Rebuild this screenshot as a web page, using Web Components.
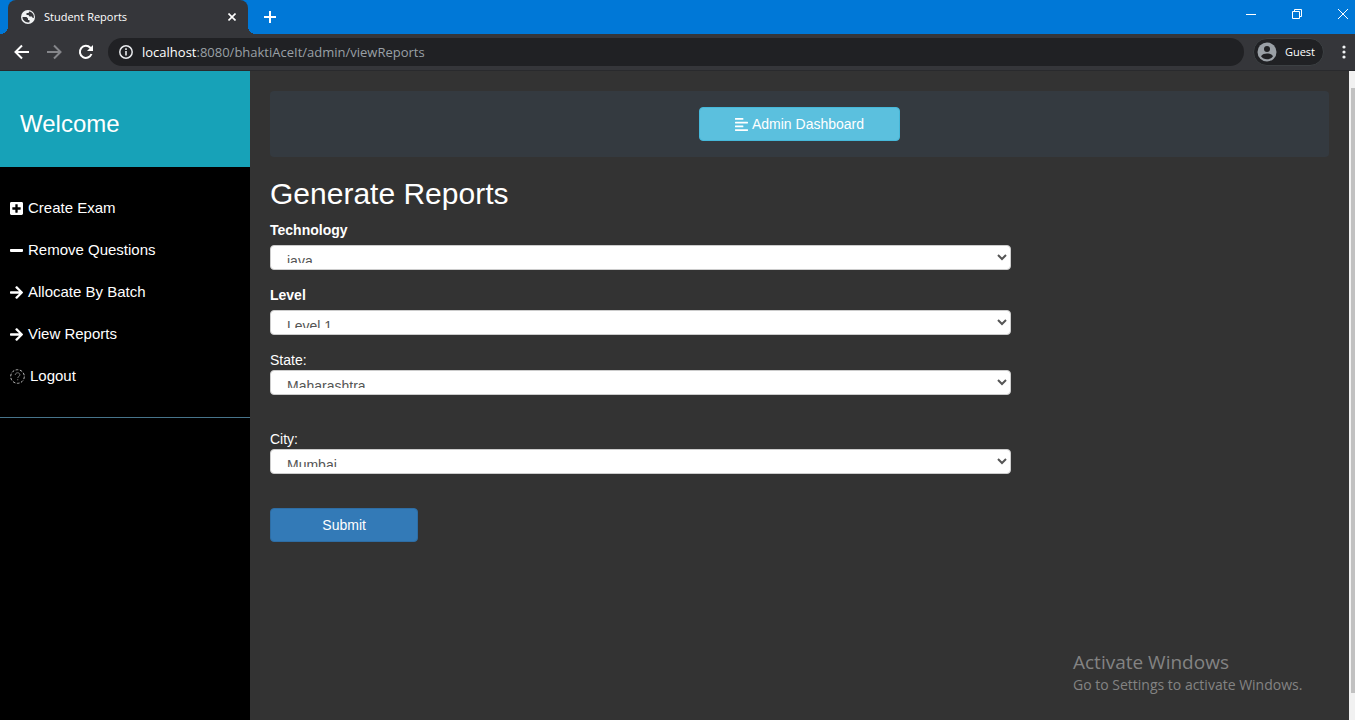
<!DOCTYPE html>
<html lang="en">
<head>
<meta charset="utf-8">
<title>Student Reports</title>
<style>
  html, body { height: 100%; }
  body { margin: 0; background: #333; font: 14px/20px "Liberation Sans", Arial, sans-serif; color: #fff; }
</style>
</head>
<body>
<browser-window>
  <tab-strip slot="chrome">Student Reports</tab-strip>
  <tool-bar slot="chrome" host="localhost" path=":8080/bhaktiAceIt/admin/viewReports" profile="Guest"></tool-bar>
  <side-bar heading="Welcome">
    <nav-item icon="plus">Create Exam</nav-item>
    <nav-item icon="minus">Remove Questions</nav-item>
    <nav-item icon="arrow">Allocate By Batch</nav-item>
    <nav-item icon="arrow">View Reports</nav-item>
    <nav-item icon="question">Logout</nav-item>
  </side-bar>
  <main-content>
    <dashboard-bar>Admin Dashboard</dashboard-bar>
    <report-form heading="Generate Reports"></report-form>
  </main-content>
  <scroll-track></scroll-track>
  <activation-note slot="overlay"></activation-note>
</browser-window>

<script>
const UI_FONT = '"Segoe UI", "Open Sans", "Noto Sans", sans-serif';

function define(name, render) {
  customElements.define(name, class extends HTMLElement {
    constructor() {
      super();
      this.attachShadow({ mode: 'open' });
    }
    connectedCallback() {
      const template = document.createElement('template');
      template.innerHTML = render(this);
      this.shadowRoot.replaceChildren(template.content.cloneNode(true));
    }
  });
}

const icons = {
  plus: [448, '<path fill="currentColor" d="M400 32H48C21.500 32 0 53.500 0 80v352c0 26.500 21.500 48 48 48h352c26.500 0 48-21.500 48-48V80c0-26.500-21.500-48-48-48zm-32 252c0 6.600-5.400 12-12 12h-92v92c0 6.600-5.400 12-12 12h-56c-6.600 0-12-5.400-12-12v-92H92c-6.600 0-12-5.400-12-12v-56c0-6.600 5.400-12 12-12h92v-92c0-6.600 5.400-12 12-12h56c6.600 0 12 5.400 12 12v92h92c6.600 0 12 5.400 12 12v56z"/>'],
  minus: [448, '<path fill="currentColor" d="M416 208H32c-17.670 0-32 14.330-32 32v32c0 17.670 14.330 32 32 32h384c17.670 0 32-14.330 32-32v-32c0-17.670-14.330-32-32-32z"/>'],
  arrow: [448, '<path fill="currentColor" d="M190.500 66.900l22.200-22.200c9.400-9.400 24.600-9.400 33.900 0L441 239c9.400 9.400 9.400 24.600 0 33.900L246.600 467.300c-9.400 9.400-24.600 9.400-33.900 0l-22.200-22.200c-9.500-9.500-9.300-25 .4-34.300L311.400 296H24c-13.300 0-24-10.700-24-24v-32c0-13.300 10.700-24 24-24h287.400L190.900 101.200c-9.800-9.300-10-24.800-.4-34.300z"/>'],
  align: [448, '<path fill="currentColor" d="M12.830 352h262.340A12.820 12.820 0 0 0 288 339.170v-38.340A12.820 12.820 0 0 0 275.170 288H12.830A12.820 12.820 0 0 0 0 300.830v38.340A12.820 12.820 0 0 0 12.830 352zm0-256h262.340A12.820 12.820 0 0 0 288 83.170V44.830A12.820 12.820 0 0 0 275.170 32H12.830A12.820 12.820 0 0 0 0 44.830v38.340A12.820 12.820 0 0 0 12.830 96zM432 160H16a16 16 0 0 0-16 16v32a16 16 0 0 0 16 16h416a16 16 0 0 0 16-16v-32a16 16 0 0 0-16-16zm0 256H16a16 16 0 0 0-16 16v32a16 16 0 0 0 16 16h416a16 16 0 0 0 16-16v-32a16 16 0 0 0-16-16z"/>'],
  question: [512, '<g fill="none" stroke="#b8b8b8"><circle cx="256" cy="256" r="232" stroke-width="34" stroke-dasharray="92 54"/><path stroke="#777" stroke-width="34" d="M178 206c4-50 38-78 80-78 46 0 80 28 80 72 0 52-74 54-74 108M264 346v40"/></g>']
};

define('glyph-icon', el => {
  const [width, body] = icons[el.getAttribute('name')];
  const size = width === 512 ? 'width="15" height="15"' : 'width="13" height="15"';
  return `
  <style>
    :host { display: inline-flex; flex: none; }
    svg { display: block; }
  </style>
  <svg ${size} viewBox="0 0 ${width} 512" aria-hidden="true">${body}</svg>`;
});

define('browser-window', () => `
  <style>
    :host { display: flex; flex-direction: column; min-height: 100vh; position: relative; }
    .page { display: flex; flex: 1; }
  </style>
  <slot name="chrome"></slot>
  <div class="page"><slot></slot></div>
  <slot name="overlay"></slot>`);

define('tab-strip', () => `
  <style>
    :host { display: flex; height: 34px; background: #0078d7; padding-left: 8px; font: 11px/16px ${UI_FONT}; }
    .tab { position: relative; display: flex; align-items: center; box-sizing: border-box; width: 240px; padding: 0 8px 0 12px; background: #35363a; border-radius: 8px 8px 0 0; gap: 8px; }
    .tab::before, .tab::after { content: ""; position: absolute; bottom: 0; width: 8px; height: 8px; }
    .tab::before { right: 100%; background: radial-gradient(circle at 0 0, transparent 8px, #35363a 8px); }
    .tab::after { left: 100%; background: radial-gradient(circle at 100% 0, transparent 8px, #35363a 8px); }
    .title { flex: 1; white-space: nowrap; }
    button { display: grid; place-items: center; padding: 0; border: 0; background: none; color: #fff; }
    .close { width: 16px; height: 16px; }
    .add { width: 28px; margin-left: 8px; }
    .controls { display: flex; margin-left: auto; }
    .controls button { width: 46px; height: 28px; }
    .controls button:last-child { width: 35px; justify-items: end; padding-right: 7px; }
    svg { display: block; fill: none; stroke: currentColor; }
  </style>
  <div class="tab">
    <svg width="16" height="16" viewBox="0 0 16 16" aria-hidden="true">
      <circle cx="8" cy="8" r="7" fill="#f1f3f4" stroke="none"/>
      <path d="M2.500 8h4l1.500 1.500v1.500h1.500v2.300C6 14 2.300 11.500 2.500 8ZM9.300 2.500 8.500 4H6.500v2h2l1 1.500h2.300l1 1.500h1c.5-3-1-5.500-4-6.500Z" fill="#35363a" stroke="none"/>
    </svg>
    <span class="title"><slot></slot></span>
    <button class="close" type="button" aria-label="Close tab"><svg width="8" height="8" viewBox="0 0 8 8" stroke-width="1.600"><path d="m.5.5 7 7m0-7-7 7"/></svg></button>
  </div>
  <button class="add" type="button" aria-label="New tab"><svg width="12" height="12" viewBox="0 0 12 12" stroke-width="2"><path d="M6 0v12M0 6h12"/></svg></button>
  <div class="controls">
    <button type="button" aria-label="Minimise"><svg width="10" height="10" viewBox="0 0 10 10"><path d="M0 5.500h10"/></svg></button>
    <button type="button" aria-label="Restore"><svg width="10" height="10" viewBox="0 0 10 10"><path d="M.5 2.500h7v7h-7zM2.500 2.500v-2h7v7h-2"/></svg></button>
    <button type="button" aria-label="Close"><svg width="10" height="10" viewBox="0 0 10 10"><path d="m0 0 10 10M10 0 0 10"/></svg></button>
  </div>`);

define('tool-bar', el => `
  <style>
    :host { display: flex; align-items: center; box-sizing: border-box; height: 37px; background: #35363a; border-bottom: 1px solid #292a2d; padding: 0 3px 0 6px; font: 13px/20px ${UI_FONT}; }
    button { display: grid; place-items: center; width: 32px; height: 28px; padding: 0; border: 0; background: none; color: #fff; font: 11px/16px ${UI_FONT}; }
    svg { display: block; flex: none; fill: none; stroke: currentColor; }
    .forward { color: #85868a; }
    .address { flex: 1; display: flex; align-items: center; gap: 8px; height: 28px; margin-left: 6px; padding-left: 10px; border-radius: 14px; background: #202124; color: #9aa0a6; white-space: nowrap; }
    .address svg { color: #e8eaed; }
    b { font-weight: 400; color: #fff; }
    .profile { box-sizing: border-box; display: flex; align-items: center; gap: 8px; width: auto; height: 28px; margin: 0 12px 0 9px; padding: 0 8px 0 3px; border: 1px solid #3c4043; border-radius: 14px; background: #202124; }
    .more { width: 16px; }
  </style>
  <button type="button" aria-label="Back"><svg width="16" height="16" viewBox="0 0 16 16" stroke-width="2"><path d="M15 8H2M8 1.500 1.500 8 8 14.500"/></svg></button>
  <button class="forward" type="button" aria-label="Forward"><svg width="16" height="16" viewBox="0 0 16 16" stroke-width="2"><path d="M1 8h13M8 1.500 14.500 8 8 14.500"/></svg></button>
  <button type="button" aria-label="Reload"><svg width="16" height="16" viewBox="0 0 16 16" stroke-width="2"><path d="M13.500 10A6 6 0 1 1 12.300 3.800L13.500 5"/><path d="M15 1v6H9z" fill="currentColor" stroke="none"/></svg></button>
  <div class="address">
    <svg width="16" height="16" viewBox="0 0 16 16" aria-hidden="true"><circle cx="8" cy="8" r="6.200" stroke-width="1.500"/><path d="M8 7v4.500M8 4.300v1.700" stroke-width="1.600"/></svg>
    <div role="textbox" aria-label="Address" contenteditable="true" spellcheck="false"><b>${el.getAttribute('host')}</b>${el.getAttribute('path')}</div>
  </div>
  <button class="profile" type="button">
    <svg width="20" height="20" viewBox="0 0 20 20" aria-hidden="true"><circle cx="10" cy="10" r="9.500" fill="#9aa0a6" stroke="none"/><circle cx="10" cy="7" r="3" fill="#202124" stroke="none"/><path d="M4 14.300c1-2.200 4-2.800 6-2.800s5 .6 6 2.800c-1.300 1.900-3.500 3-6 3s-4.700-1.100-6-3Z" fill="#202124" stroke="none"/></svg>
    <span>${el.getAttribute('profile')}</span>
  </button>
  <button class="more" type="button" aria-label="Menu"><svg width="4" height="16" viewBox="0 0 4 16"><g fill="#f1f3f4" stroke="none"><circle cx="2" cy="3" r="1.600"/><circle cx="2" cy="8" r="1.600"/><circle cx="2" cy="13" r="1.600"/></g></svg></button>`);

define('side-bar', el => `
  <style>
    :host { display: block; flex: none; width: 250px; background: #000; }
    header { padding: 40px 20px 30px; background: #17a2b8; }
    h3 { margin: 0; font-size: 24px; line-height: 26px; font-weight: 400; }
    nav { padding: 20px 0; border-bottom: 1px solid #47748b; }
  </style>
  <header><h3>${el.getAttribute('heading')}</h3></header>
  <nav><slot></slot></nav>`);

define('nav-item', el => `
  <style>
    :host { display: block; }
    a { display: flex; align-items: center; gap: 5px; padding: 10px; font-size: 15px; line-height: 22px; color: #fff; text-decoration: none; }
  </style>
  <a href="#"><glyph-icon name="${el.getAttribute('icon')}"></glyph-icon><span><slot></slot></span></a>`);

define('main-content', () => `
  <style>
    :host { display: block; flex: 1; min-width: 0; padding: 20px; background: #333; }
  </style>
  <main><slot></slot></main>`);

define('dashboard-bar', () => `
  <style>
    :host { display: flex; justify-content: center; padding: 16px 0; margin-bottom: 20px; background: #343a40; border-radius: 4px; }
    button { display: flex; align-items: center; justify-content: center; gap: 4px; box-sizing: border-box; width: 19%; height: 34px; padding: 0; border: 1px solid #46b8da; border-radius: 4px; background: #5bc0de; color: #fff; font: inherit; white-space: nowrap; }
  </style>
  <button type="button"><glyph-icon name="align"></glyph-icon><span><slot></slot></span></button>`);

define('report-form', el => `
  <style>
    :host { display: block; }
    h2 { margin: 0 0 10px; font-size: 30px; line-height: 33px; font-weight: 400; }
    select-field { margin-bottom: 15px; }
    .spaced { margin-bottom: 34px; }
    button { display: block; box-sizing: border-box; width: 14%; height: 34px; padding: 0; border: 1px solid #2e6da4; border-radius: 4px; background: #337ab7; color: #fff; font: inherit; }
  </style>
  <h2>${el.getAttribute('heading')}</h2>
  <form>
    <select-field strong label="Technology" value="java"></select-field>
    <select-field strong label="Level" value="Level 1"></select-field>
    <select-field class="spaced" label="State:" value="Maharashtra"></select-field>
    <select-field class="spaced" label="City:" value="Mumbai"></select-field>
    <button type="submit">Submit</button>
  </form>`);

define('select-field', el => `
  <style>
    :host { display: block; width: 70%; }
    label { display: block; }
    :host([strong]) label { margin-bottom: 5px; font-weight: 700; }
    select { display: block; box-sizing: border-box; width: 100%; height: 25px; margin: 0; padding: 6px 12px; border: 1px solid #ccc; border-radius: 4px; background-color: #fff; color: #555; font: 14px/20px "Liberation Sans", Arial, sans-serif; }
  </style>
  <label for="choice">${el.getAttribute('label')}</label>
  <select id="choice"><option>${el.getAttribute('value')}</option></select>`);

define('scroll-track', () => `
  <style>
    :host { display: flex; flex-direction: column; flex: none; box-sizing: border-box; width: 6px; padding: 17px 0 27px 2px; background: #f1f1f1; }
    div { flex: 1; background: #c1c1c1; }
  </style>
  <div></div>`);

define('activation-note', () => `
  <style>
    :host { position: absolute; right: 46px; bottom: 25px; width: 236px; color: #838383; font: 14px/20px ${UI_FONT}; white-space: nowrap; pointer-events: none; }
    p { margin: 0; }
    .title { font-size: 19px; line-height: 26px; }
  </style>
  <p class="title">Activate Windows</p>
  <p>Go to Settings to activate Windows.</p>`);
</script>
</body>
</html>
